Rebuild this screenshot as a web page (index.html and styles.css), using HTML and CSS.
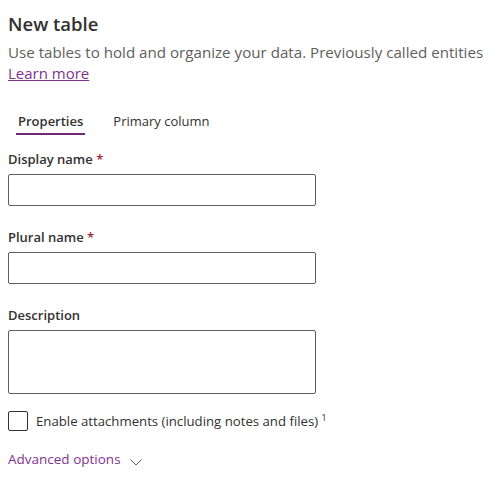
FILE: index.html
```html
<!DOCTYPE html>
<html lang="en">
<head>
<meta charset="utf-8">
<link rel="stylesheet" href="styles.css">
</head>
<body>
<div class="panel">
  <h1 class="title">New table</h1>
  <p class="subtitle">Use tables to hold and organize your data. Previously called entities</p>
  <a class="learn" href="#">Learn more</a>
  <div class="tabs">
    <div class="tab active">Properties</div>
    <div class="tab">Primary column</div>
  </div>
  <div class="field first">
    <label class="label">Display name <span class="req">*</span></label>
    <div class="input"></div>
  </div>
  <div class="field">
    <label class="label">Plural name <span class="req">*</span></label>
    <div class="input"></div>
  </div>
  <div class="field">
    <label class="label">Description</label>
    <div class="input textarea"></div>
  </div>
  <div class="check-row">
    <span class="checkbox"></span>
    <span class="check-label">Enable attachments (including notes and files) <sup class="sup">1</sup></span>
  </div>
  <div class="advanced">
    <span class="adv-text">Advanced options</span>
    <svg class="chev" width="12" height="7" viewBox="0 0 12 7"><path d="M0.5 0.5 L6 6 L11.5 0.5" fill="none" stroke="#605e5c" stroke-width="1"/></svg>
  </div>
</div>
</body>
</html>
```
FILE: styles.css
```css
html, body {
  margin: 0;
  padding: 0;
  background: #ffffff;
}
body {
  font-family: "Open Sans", "Noto Sans", sans-serif;
  color: #323130;
}
.panel {
  padding: 10px 8px 0 8px;
  display: flex;
  flex-direction: column;
  align-items: flex-start;
}
.title {
  margin: 0;
  font-size: 18.5px;
  font-weight: 600;
  line-height: 28px;
  color: #323130;
}
.subtitle {
  margin: 4px 0 0 0;
  font-size: 15.15px;
  line-height: 21px;
  color: #605e5c;
  white-space: nowrap;
}
.learn {
  font-size: 15px;
  line-height: 21px;
  color: #80338e;
  text-decoration: underline;
}
.tabs {
  display: flex;
  margin-top: 27px;
}
.tab {
  font-size: 13px;
  line-height: 20px;
  padding: 0 10px 4px 10px;
  margin-right: 10px;
  color: #323130;
  position: relative;
}
.tab.active {
  font-weight: 600;
}
.tab.active::after {
  content: "";
  position: absolute;
  left: 8px;
  right: 8px;
  bottom: 0;
  height: 2px;
  background: #742774;
}
.field {
  display: flex;
  flex-direction: column;
  margin-top: 21px;
}
.field.first {
  margin-top: 14px;
}
.label {
  font-size: 13px;
  font-weight: 600;
  line-height: 20px;
  padding-bottom: 5px;
  color: #323130;
}
.req {
  color: #a4262c;
}
.input {
  width: 306px;
  height: 30px;
  border: 1px solid #605e5c;
  border-radius: 2px;
}
.textarea {
  height: 62px;
}
.check-row {
  display: flex;
  align-items: center;
  margin-top: 17px;
}
.checkbox {
  width: 18px;
  height: 18px;
  border: 1px solid #323130;
  border-radius: 2px;
  margin-right: 8px;
}
.check-label {
  font-size: 13.2px;
  line-height: 20px;
  color: #323130;
}
.sup {
  font-size: 9px;
  line-height: 0;
}
.advanced {
  display: flex;
  align-items: center;
  margin-top: 18px;
  color: #80338e;
}
.adv-text {
  font-size: 13.5px;
  line-height: 20px;
}
.chev {
  margin-left: 9px;
  margin-top: 6px;
}
```
